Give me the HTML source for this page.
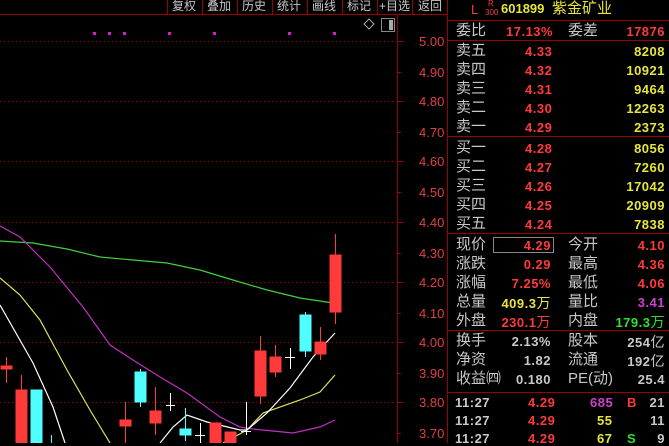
<!DOCTYPE html>
<html><head><meta charset="utf-8"><style>
*{margin:0;padding:0}
body{width:669px;height:443px;background:#000;overflow:hidden;position:relative;font-family:"Liberation Sans","Noto Sans CJK SC",sans-serif}
.t{position:absolute;white-space:nowrap;line-height:1}
.g{color:#c8c8c8}.r{color:#ff3a3a}.y{color:#e6e63c}.gr{color:#30e030}.m{color:#d040d0}
.l{font-size:15px}.n{font-size:13px;font-weight:bold;letter-spacing:0.5px}
</style></head><body>
<svg width="669" height="443" style="position:absolute;left:0;top:0" shape-rendering="crispEdges">
<g stroke="#900" stroke-width="1" fill="none">
<line x1="0" y1="14.5" x2="447" y2="14.5"/>
<line x1="167.5" y1="0" x2="167.5" y2="14"/><line x1="202.5" y1="0" x2="202.5" y2="14"/><line x1="237.5" y1="0" x2="237.5" y2="14"/><line x1="272.5" y1="0" x2="272.5" y2="14"/><line x1="307.5" y1="0" x2="307.5" y2="14"/><line x1="342.5" y1="0" x2="342.5" y2="14"/><line x1="377.5" y1="0" x2="377.5" y2="14"/><line x1="412.5" y1="0" x2="412.5" y2="14"/>
<line x1="397.5" y1="14" x2="397.5" y2="443"/>
<line x1="447.5" y1="0" x2="447.5" y2="443"/>
<line x1="447" y1="20.5" x2="669" y2="20.5"/>
<line x1="447" y1="40.5" x2="669" y2="40.5"/>
<line x1="447" y1="136.5" x2="669" y2="136.5"/>
<line x1="447" y1="233.5" x2="669" y2="233.5"/>
<line x1="447" y1="330.5" x2="669" y2="330.5"/>
<line x1="447" y1="392.5" x2="669" y2="392.5"/>
</g>
<g stroke="#a00" stroke-dasharray="1,3">
<line x1="0" y1="41.5" x2="395" y2="41.5"/><line x1="0" y1="101.5" x2="395" y2="101.5"/><line x1="0" y1="161.5" x2="395" y2="161.5"/><line x1="0" y1="222.5" x2="395" y2="222.5"/><line x1="0" y1="282.5" x2="395" y2="282.5"/><line x1="0" y1="342.5" x2="395" y2="342.5"/><line x1="0" y1="402.5" x2="395" y2="402.5"/>
</g>
<g stroke="#a00"><line x1="397" y1="41.5" x2="403" y2="41.5"/><line x1="397" y1="72.5" x2="401" y2="72.5"/><line x1="397" y1="101.5" x2="403" y2="101.5"/><line x1="397" y1="132.5" x2="401" y2="132.5"/><line x1="397" y1="161.5" x2="403" y2="161.5"/><line x1="397" y1="192.5" x2="401" y2="192.5"/><line x1="397" y1="222.5" x2="403" y2="222.5"/><line x1="397" y1="253.5" x2="401" y2="253.5"/><line x1="397" y1="282.5" x2="403" y2="282.5"/><line x1="397" y1="313.5" x2="401" y2="313.5"/><line x1="397" y1="342.5" x2="403" y2="342.5"/><line x1="397" y1="373.5" x2="401" y2="373.5"/><line x1="397" y1="402.5" x2="403" y2="402.5"/><line x1="397" y1="433.5" x2="401" y2="433.5"/></g>
<g fill="#d020d0"><rect x="93" y="32" width="3" height="3"/><rect x="108" y="32" width="3" height="3"/><rect x="123" y="32" width="3" height="3"/><rect x="168" y="32" width="3" height="3"/><rect x="213" y="32" width="3" height="3"/><rect x="288" y="32" width="3" height="3"/><rect x="333" y="32" width="3" height="3"/></g>
<path d="M369 19 L374 24 L369 29 L364 24 Z" fill="none" stroke="#aaa" shape-rendering="auto"/>
<rect x="381.5" y="18.5" width="13" height="13" fill="none" stroke="#888"/><rect x="389" y="20" width="4" height="10" fill="#aaa"/>
<g fill="none" stroke-width="1.2" shape-rendering="auto">
<polyline stroke="#40d040" points="0,241 33,243 67,249 100,257 133,260 167,263 200,270 233,280 267,290 300,298 333,303"/>
<polyline stroke="#c030c0" points="0,226 20,237 50,267 83,307 110,345 133,360 160,377 187,393 220,417 240,427 253,429 293,433 320,427 335,420"/>
<polyline stroke="#e0e060" points="0,278 20,295 40,320 67,370 90,410 110,443"/>
<polyline stroke="#e0e060" points="223,443 247,430 263,413 300,400 320,392 335,375"/>
<polyline stroke="#fff" points="0,305 33,363 53,407 65,443"/>
<polyline stroke="#fff" points="160,443 173,427 187,415 207,422 240,430 247,430 267,413 290,388 313,357 335,333"/>
</g>
<g stroke="#ff3a3a" fill="#ff3a3a">
<line x1="6.5" y1="357" x2="6.5" y2="383"/><rect x="1" y="366" width="11" height="3"/>
<line x1="21.5" y1="375" x2="21.5" y2="390"/><rect x="16" y="390" width="11" height="53"/>
<line x1="125.5" y1="402" x2="125.5" y2="443"/><rect x="120" y="420" width="11" height="6"/>
<line x1="155.5" y1="387" x2="155.5" y2="435"/><rect x="150" y="411" width="11" height="12"/>
<rect x="210" y="423" width="11" height="20"/>
<rect x="225" y="432" width="11" height="11"/>
<line x1="260.5" y1="336" x2="260.5" y2="404"/><rect x="255" y="351" width="11" height="45"/>
<line x1="275.5" y1="345" x2="275.5" y2="377"/><rect x="270" y="357" width="11" height="15"/>
<line x1="320.5" y1="327" x2="320.5" y2="360"/><rect x="315" y="342" width="11" height="12"/>
<line x1="335.5" y1="234" x2="335.5" y2="324"/><rect x="330" y="255" width="11" height="57"/>
</g>
<g stroke="#50ffff" fill="#50ffff">
<rect x="31" y="390" width="11" height="53"/>
<line x1="51.5" y1="435" x2="51.5" y2="443"/>
<line x1="140.5" y1="369" x2="140.5" y2="407"/><rect x="135" y="372" width="11" height="30"/>
<line x1="185.5" y1="408" x2="185.5" y2="441"/><rect x="180" y="429" width="11" height="6"/>
<line x1="305.5" y1="312" x2="305.5" y2="357"/><rect x="300" y="315" width="11" height="36"/>
</g>
<g stroke="#fff">
<line x1="170.5" y1="393" x2="170.5" y2="411"/><line x1="166" y1="405.5" x2="175" y2="405.5"/>
<line x1="200.5" y1="423" x2="200.5" y2="443"/><line x1="195" y1="435.5" x2="205" y2="435.5"/>
<line x1="246.5" y1="402" x2="246.5" y2="435"/><line x1="241" y1="431.5" x2="251" y2="431.5"/>
<line x1="290.5" y1="348" x2="290.5" y2="369"/><line x1="285" y1="357.5" x2="295" y2="357.5"/>
</g>
<rect x="493.5" y="237.5" width="60" height="15" fill="none" stroke="#888"/>
</svg>
<div class="t g" style="font-size:12px;top:0;left:172px">复权</div>
<div class="t g" style="font-size:12px;top:0;left:207px">叠加</div>
<div class="t g" style="font-size:12px;top:0;left:242px">历史</div>
<div class="t g" style="font-size:12px;top:0;left:277px">统计</div>
<div class="t g" style="font-size:12px;top:0;left:312px">画线</div>
<div class="t g" style="font-size:12px;top:0;left:347px">标记</div>
<div class="t g" style="font-size:12px;top:0;left:379px">+目选</div>
<div class="t g" style="font-size:12px;top:0;left:418px">返回</div>
<div style="position:absolute;left:419px;top:0;width:28px;color:#e04040;font-size:13px">
<div class="t" style="top:35px">5.00</div><div class="t" style="top:66px">4.90</div><div class="t" style="top:95px">4.80</div><div class="t" style="top:126px">4.70</div><div class="t" style="top:155px">4.60</div><div class="t" style="top:186px">4.50</div><div class="t" style="top:216px">4.40</div><div class="t" style="top:247px">4.30</div><div class="t" style="top:276px">4.20</div><div class="t" style="top:307px">4.10</div><div class="t" style="top:336px">4.00</div><div class="t" style="top:367px">3.90</div><div class="t" style="top:396px">3.80</div><div class="t" style="top:427px">3.70</div>
</div>
<div class="t r" style="left:471px;top:3px;font-size:13px">L</div>
<div class="t r" style="left:488px;top:0;font-size:8px">R</div>
<div class="t r" style="left:485px;top:9px;font-size:8px">300</div>
<div class="t y" style="left:501px;top:2px;font-size:13px;font-weight:bold">601899</div>
<div class="t y" style="left:552px;top:1px;font-size:15px">紫金矿业</div>
<div class="t g l" style="left:456px;top:23px">委比</div><div class="t r n" style="left:506px;top:25px">17.13%</div><div class="t g l" style="left:568px;top:23px">委差</div><div class="t r n" style="right:4px;top:25px">17876</div>
<div class="t g l" style="left:456px;top:43px">卖五</div><div class="t r n" style="left:525px;top:45px">4.33</div><div class="t y n" style="right:4px;top:45px">8208</div>
<div class="t g l" style="left:456px;top:62px">卖四</div><div class="t r n" style="left:525px;top:64px">4.32</div><div class="t y n" style="right:4px;top:64px">10921</div>
<div class="t g l" style="left:456px;top:81px">卖三</div><div class="t r n" style="left:525px;top:83px">4.31</div><div class="t y n" style="right:4px;top:83px">9464</div>
<div class="t g l" style="left:456px;top:100px">卖二</div><div class="t r n" style="left:525px;top:102px">4.30</div><div class="t y n" style="right:4px;top:102px">12263</div>
<div class="t g l" style="left:456px;top:119px">卖一</div><div class="t r n" style="left:525px;top:121px">4.29</div><div class="t y n" style="right:4px;top:121px">2373</div>
<div class="t g l" style="left:456px;top:140px">买一</div><div class="t r n" style="left:525px;top:142px">4.28</div><div class="t y n" style="right:4px;top:142px">8056</div>
<div class="t g l" style="left:456px;top:159px">买二</div><div class="t r n" style="left:525px;top:161px">4.27</div><div class="t y n" style="right:4px;top:161px">7260</div>
<div class="t g l" style="left:456px;top:178px">买三</div><div class="t r n" style="left:525px;top:180px">4.26</div><div class="t y n" style="right:4px;top:180px">17042</div>
<div class="t g l" style="left:456px;top:197px">买四</div><div class="t r n" style="left:525px;top:199px">4.25</div><div class="t y n" style="right:4px;top:199px">20909</div>
<div class="t g l" style="left:456px;top:216px">买五</div><div class="t r n" style="left:525px;top:218px">4.24</div><div class="t y n" style="right:4px;top:218px">7838</div>
<div class="t g l" style="left:456px;top:237px">现价</div><div class="t r n" style="right:118px;top:239px">4.29</div><div class="t g l" style="left:568px;top:237px">今开</div><div class="t r n" style="right:4px;top:239px">4.10</div>
<div class="t g l" style="left:456px;top:256px">涨跌</div><div class="t r n" style="right:118px;top:258px">0.29</div><div class="t g l" style="left:568px;top:256px">最高</div><div class="t r n" style="right:4px;top:258px">4.36</div>
<div class="t g l" style="left:456px;top:275px">涨幅</div><div class="t r n" style="right:118px;top:277px">7.25%</div><div class="t g l" style="left:568px;top:275px">最低</div><div class="t r n" style="right:4px;top:277px">4.06</div>
<div class="t g l" style="left:456px;top:294px">总量</div><div class="t y n" style="right:118px;top:296px">409.3<span style="font-weight:normal;font-size:14px">万</span></div><div class="t g l" style="left:568px;top:294px">量比</div><div class="t m n" style="right:4px;top:296px">3.41</div>
<div class="t g l" style="left:456px;top:313px">外盘</div><div class="t r n" style="right:118px;top:315px">230.1<span style="font-weight:normal;font-size:14px">万</span></div><div class="t g l" style="left:568px;top:313px">内盘</div><div class="t gr n" style="right:4px;top:315px">179.3<span style="font-weight:normal;font-size:14px">万</span></div>
<div class="t g l" style="left:456px;top:333px">换手</div><div class="t g n" style="right:118px;top:335px">2.13%</div><div class="t g l" style="left:568px;top:333px">股本</div><div class="t g n" style="right:4px;top:335px">254<span style="font-weight:normal;font-size:14px">亿</span></div>
<div class="t g l" style="left:456px;top:352px">净资</div><div class="t g n" style="right:118px;top:354px">1.82</div><div class="t g l" style="left:568px;top:352px">流通</div><div class="t g n" style="right:4px;top:354px">192<span style="font-weight:normal;font-size:14px">亿</span></div>
<div class="t g l" style="left:456px;top:371px">收益㈣</div><div class="t g n" style="right:118px;top:373px">0.180</div><div class="t g l" style="left:568px;top:371px">PE(动)</div><div class="t g n" style="right:4px;top:373px">25.4</div>
<div class="t g n" style="left:455px;top:396px">11:27</div><div class="t r n" style="left:528px;top:396px">4.29</div><div class="t m n" style="left:590px;top:396px">685</div><div class="t r n" style="left:627px;top:396px">B</div><div class="t g n" style="right:4px;top:396px">21</div>
<div class="t g n" style="left:455px;top:414px">11:27</div><div class="t r n" style="left:528px;top:414px">4.29</div><div class="t y n" style="left:597px;top:414px">55</div><div class="t g n" style="right:4px;top:414px">11</div>
<div class="t g n" style="left:455px;top:432px">11:27</div><div class="t r n" style="left:528px;top:432px">4.29</div><div class="t y n" style="left:597px;top:432px">67</div><div class="t gr n" style="left:627px;top:432px">S</div><div class="t g n" style="right:4px;top:432px">9</div>
</body></html>
